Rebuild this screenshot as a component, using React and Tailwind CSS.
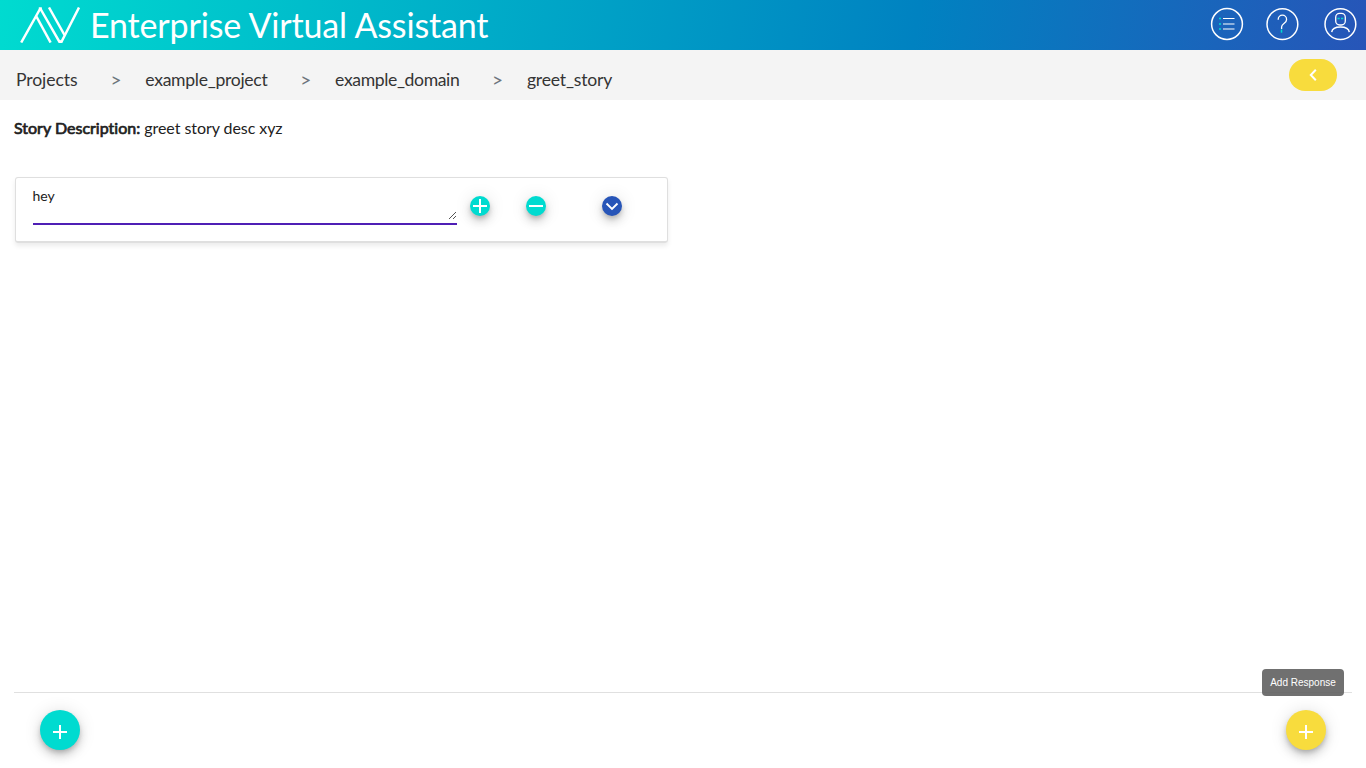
const crumbs = [
  { label: 'Projects', cls: 'w-[94.5px] tracking-[-0.1px]' },
  { label: 'example_project', cls: 'w-[155px] tracking-[-0.3px]' },
  { label: 'example_domain', cls: 'w-[157px] tracking-[-0.38px]' },
];

const fabShadow =
  'shadow-[0_3px_5px_-1px_rgba(0,0,0,0.2),0_6px_10px_0_rgba(0,0,0,0.14),0_1px_18px_0_rgba(0,0,0,0.12)]';

function Logo() {
  return (
    <svg width="60" height="36" viewBox="0 0 60 36" fill="none" stroke="white" strokeWidth="2.5" strokeLinejoin="bevel" className="mt-[7px] ml-5 shrink-0">
      <path d="M1.200 35.500 L20.300 1.500 L39.300 34.700 H41.500 L59 0.500" />
      <path d="M16.400 9.500 L30.600 35.500" />
      <path d="M29 0.500 L44.500 28" />
      <path d="M18.800 1.500h3M38.500 34.500h4" />
    </svg>
  );
}

function ListIcon() {
  return (
    <svg width="34" height="34" viewBox="0 0 34 34" fill="none" stroke="white" strokeWidth="1.5">
      <circle cx="17" cy="17" r="15.4" />
      <path d="M13 11.500h11.500M13 17h11.500M13 22h11.500" strokeWidth="1.2" />
      <path d="M9 11.500h2M9 17h2M9 22h2" stroke="#00dbd0" strokeWidth="1.6" />
    </svg>
  );
}

function HelpIcon() {
  return (
    <svg width="34" height="34" viewBox="0 0 34 34" fill="none" stroke="white" strokeWidth="1.5">
      <circle cx="17.400" cy="17.200" r="15.4" />
      <path d="M13.200 12.800v-.4a4.200 4.200 0 0 1 8.400 0c0 4.400-5 3.800-5 7.600v2" strokeWidth="1.3" />
      <path d="M16.500 22.500v3.200" stroke="#00dbd0" />
    </svg>
  );
}

function UserIcon() {
  return (
    <svg width="34" height="34" viewBox="0 0 34 34" fill="none" stroke="white" strokeWidth="1.5">
      <circle cx="17.400" cy="17.200" r="15.4" />
      <rect x="12.700" y="6.400" width="9.600" height="11.600" rx="3.900" strokeWidth="1.3" />
      <path d="M8.700 25.200c.4-3.400 3.600-5.200 8.700-5.200s8.500 1.800 8.900 5.200" strokeWidth="1.4" />
      <path d="M14.500 11.500h2.200M18 11.500h2.200" stroke="#00dbd0" strokeWidth="1.4" />
    </svg>
  );
}

function Stroke({ size, d, width }) {
  return (
    <svg width={size} height={size} viewBox={`0 0 ${size} ${size}`} fill="none" stroke="white" strokeWidth={width}>
      <path d={d} />
    </svg>
  );
}

export default function App() {
  return (
    <div className="flex h-screen flex-col overflow-hidden bg-white font-['Lato',sans-serif] text-[#212121] [font-variant-ligatures:none]">
      <header className="flex h-[50px] shrink-0 bg-[linear-gradient(100deg,#00dbd0_0%,#0082c1_67%,#2755b8_100%)] text-white">
        <Logo />
        <h1 className="ml-[10px] text-[34px] leading-[49px] tracking-[-0.15px] whitespace-nowrap">Enterprise Virtual Assistant</h1>
        <div className="ml-auto flex pt-[7px] pr-[9px]">
          <ListIcon />
          <div className="ml-[21px]"><HelpIcon /></div>
          <div className="ml-6"><UserIcon /></div>
        </div>
      </header>
      <nav className="flex h-[50px] shrink-0 bg-[#f4f4f4] pl-4 text-[17.6px] leading-[59px] text-[#343434]">
        {crumbs.map((c) => (
          <div key={c.label} className="flex">
            <span className={c.cls}>{c.label}</span>
            <span className="w-[34.800px] text-[19px] text-[#6c757d]">&gt;</span>
          </div>
        ))}
        <span className="tracking-[-0.2px]">greet_story</span>
        <button className="mt-[9px] mr-[29px] ml-auto flex h-8 w-12 items-center justify-center rounded-full bg-[#f8dc3d]">
          <Stroke size={14} d="M9.800 1.800 4.800 7 9.800 12.200" width={2} />
        </button>
      </nav>
      <main className="flex min-h-0 flex-1 flex-col px-[14px]">
        <p className="mt-4 text-[16px] leading-6 tracking-[-0.06px]">
          <span className="tracking-[0.01px] [-webkit-text-stroke:0.7px_#212121]">Story Description:</span> greet story desc xyz
        </p>
        <section className="mt-[37px] ml-px flex h-[66px] w-[653px] shrink-0 rounded-[3px] border border-b-2 border-[#dfdfdf] pl-[17px] shadow-[0_3px_5px_rgba(0,0,0,0.08)]">
          <div className="flex h-[47px] w-[424px] justify-between border-b-2 border-[#4f1fb5] text-[14px]">
            <span className="-ml-[0.5px] pt-2 leading-5">hey</span>
            <svg width="9" height="9" viewBox="0 0 9 9" className="mt-[33px]" stroke="#555" strokeWidth="1">
              <path d="M1 8 8 1M5 8 8 5" />
            </svg>
          </div>
          <button className={`mt-[18px] ml-[13px] flex size-5 items-center justify-center rounded-full bg-[#00dbd0] ${fabShadow}`}>
            <Stroke size={20} d="M3 10h14M10 3v14" width={2} />
          </button>
          <button className={`mt-[18px] ml-9 flex size-5 items-center justify-center rounded-full bg-[#00dbd0] ${fabShadow}`}>
            <Stroke size={20} d="M3 10h14" width={2} />
          </button>
          <button className={`mt-[18px] ml-14 flex size-5 items-center justify-center rounded-full bg-[#2755b8] ${fabShadow}`}>
            <Stroke size={20} d="M4.500 7.500 10 13 15.500 7.500" width={1.900} />
          </button>
        </section>
        <footer className="relative mt-auto flex h-[76px] shrink-0 justify-between border-t border-[#e0e0e0] px-[26px] pt-[17px]">
          <button className={`flex size-10 items-center justify-center rounded-full bg-[#00dbd0] ${fabShadow}`}>
            <Stroke size={40} d="M13 22h14M20 15v14" width={2} />
          </button>
          <button className={`flex size-10 items-center justify-center rounded-full bg-[#f8dc3d] ${fabShadow}`}>
            <Stroke size={40} d="M13 22h14M20 15v14" width={2} />
          </button>
          <div className="absolute -top-6 right-2 h-[27px] w-[82px] rounded-[4px] bg-[#616161]/90 text-center font-['Liberation_Sans',sans-serif] text-[10px] leading-[27px] text-white">
            Add Response
          </div>
        </footer>
      </main>
    </div>
  );
}
